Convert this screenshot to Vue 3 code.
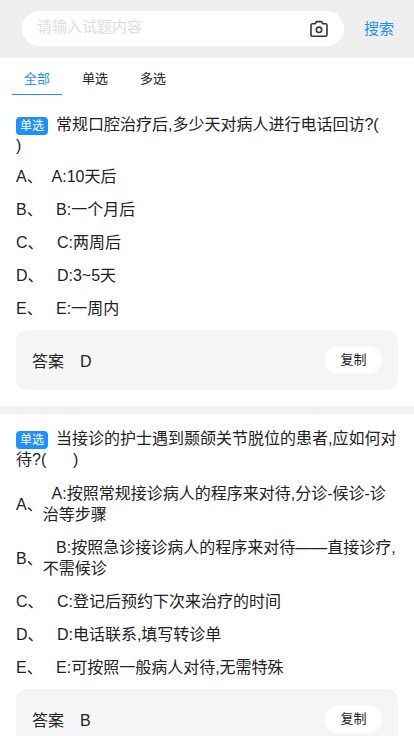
<script setup>
const questions = [
  {
    title: '常规口腔治疗后,多少天对病人进行电话回访?(      )',
    answer: 'D',
    options: [
      ['A、', '\u00a0\u00a0A:10天后'],
      ['B、', '\u00a0\u00a0\u00a0B:一个月后'],
      ['C、', '\u00a0\u00a0\u00a0C:两周后'],
      ['D、', '\u00a0\u00a0\u00a0D:3~5天'],
      ['E、', '\u00a0\u00a0\u00a0E:一周内'],
    ],
  },
  {
    title: '当接诊的护士遇到颞颌关节脱位的患者,应如何对待?(      )',
    answer: 'B',
    options: [
      ['A、', '\u00a0\u00a0A:按照常规接诊病人的程序来对待,分诊-候诊-诊治等步骤'],
      ['B、', '\u00a0\u00a0\u00a0B:按照急诊接诊病人的程序来对待——直接诊疗,不需候诊'],
      ['C、', '\u00a0\u00a0\u00a0C:登记后预约下次来治疗的时间'],
      ['D、', '\u00a0\u00a0\u00a0D:电话联系,填写转诊单'],
      ['E、', '\u00a0\u00a0\u00a0E:可按照一般病人对待,无需特殊'],
    ],
  },
]
</script>

<template>
  <div class="page">
    <header class="search">
      <div class="pill">
        <span class="placeholder">请输入试题内容</span>
        <svg class="camera" width="20" height="20" viewBox="0 0 20 20" fill="none" stroke="#333" stroke-width="1.6" stroke-linejoin="round">
          <path d="M3.4 4.8h2.7L7.3 2.6h5.4l1.2 2.2h2.7a1.4 1.4 0 0 1 1.4 1.4v9.6a1.4 1.4 0 0 1-1.4 1.4H3.4A1.4 1.4 0 0 1 2 16.4V6.2a1.4 1.4 0 0 1 1.4-1.4z" />
          <circle cx="10" cy="10.8" r="2.7" />
        </svg>
      </div>
      <span class="search-btn">搜索</span>
    </header>

    <nav class="tabs">
      <span class="tab active">全部</span>
      <span class="tab">单选</span>
      <span class="tab">多选</span>
    </nav>

    <section v-for="(q, i) in questions" :key="i" class="card">
      <div class="title"><span class="tag">单选</span>{{ q.title }}</div>
      <div v-for="opt in q.options" :key="opt[0]" class="option">
        <span class="label">{{ opt[0] }}</span>
        <span class="text">{{ opt[1] }}</span>
      </div>
      <div class="answer">
        <span class="answer-text">答案<span class="answer-value">{{ q.answer }}</span></span>
        <span class="copy">复制</span>
      </div>
    </section>
  </div>
</template>

<style>
html, body { margin: 0; background: #fff; }
</style>

<style scoped>
.page {
  width: 414px;
  height: 736px;
  overflow: hidden;
  background: #fff;
  color: #222;
  font-family: "Liberation Sans", "Noto Sans CJK SC", sans-serif;
}
.search {
  box-sizing: border-box;
  height: 58px;
  background: #efefef;
  display: flex;
  align-items: center;
  padding: 0 20px 0 22px;
  justify-content: space-between;
}
.pill {
  box-sizing: border-box;
  width: 322px;
  height: 35px;
  margin-top: -1px;
  border-radius: 18px;
  background: #fff;
  display: flex;
  align-items: center;
  justify-content: space-between;
  padding: 0 15px;
}
.placeholder { font-size: 15px; line-height: 20px; padding-bottom: 3px; color: #dedede; }
.camera { display: block; }
.search-btn { font-size: 15px; line-height: 20px; color: #1e90ff; }
.tabs {
  display: flex;
  height: 37px;
  padding-left: 12px;
  margin-bottom: 4px;
}
.tab {
  box-sizing: border-box;
  width: 50px;
  height: 37px;
  margin-right: 8px;
  font-size: 13px;
  line-height: 41px;
  text-align: center;
  color: #222;
}
.active {
  color: #1e90ff;
  border-bottom: 1px solid #1e90ff;
}
.card {
  padding: 15px 8px 16px 16px;
  border-bottom: 8px solid #f1f1f1;
}
.card + .card { padding-top: 14px; }
.title {
  font-size: 16px;
  line-height: 21px;
  margin-bottom: 7px;
  white-space: pre-wrap;
}
.card:first-of-type .title { margin-bottom: 4px; }
.tag {
  display: inline-block;
  width: 32px;
  height: 18px;
  margin-right: 8px;
  border-radius: 4px;
  background: #1e90ff;
  color: #fff;
  font-size: 12px;
  line-height: 18px;
  text-align: center;
  vertical-align: 0;
}
.option {
  display: flex;
  align-items: center;
  font-size: 16px;
  line-height: 21px;
  padding: 6px 8px 6px 0;
}
.label { flex: none; }
.answer {
  box-sizing: border-box;
  height: 60px;
  margin: 5px 8px 0 0;
  padding: 0 16px;
  border-radius: 10px;
  background: #f4f5f7;
  display: flex;
  align-items: center;
  justify-content: space-between;
  font-size: 16px;
}
.answer-value { margin-left: 16px; }
.copy {
  width: 57px;
  height: 28px;
  border-radius: 14px;
  background: #fff;
  font-size: 13px;
  line-height: 28px;
  text-align: center;
}
</style>
